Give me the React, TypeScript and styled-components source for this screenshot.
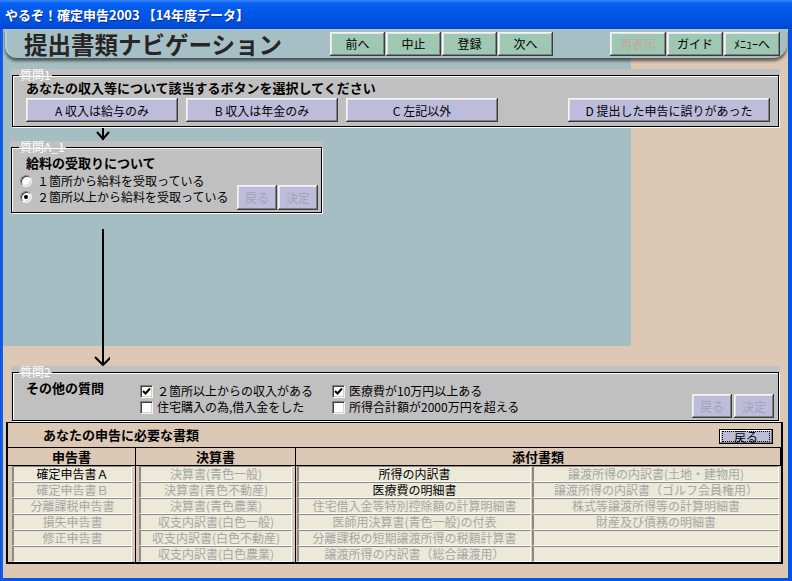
import React from "react";
import styled, { createGlobalStyle } from "styled-components";

const GlobalStyle = createGlobalStyle`
  html, body { margin: 0; padding: 0; background: #fff; }
  body { font-family: "Noto Sans CJK JP", "Noto Sans", sans-serif; font-size: 12px; }
  * { box-sizing: border-box; }
`;

const Window = styled.div`
  width: 792px;
  height: 581px;
  display: flex;
  flex-direction: column;
  background: linear-gradient(90deg, #0a4fd6, #1664ee 2px, #0055e5 4px);
  overflow: hidden;
`;

const TitleBar = styled.div`
  height: 29px;
  flex: none;
  display: flex;
  align-items: center;
  padding-left: 5px;
  color: #fff;
  font-size: 13px;
  font-weight: bold;
  text-shadow: 1px 1px 0 #0b2a8a;
  background: linear-gradient(#3a8cff 0, #0a62f2 3px, #0058ea 12px, #0052e0 22px, #0046d0 29px);
`;

const Client = styled.div`
  flex: 1;
  margin: 0 4px 3px 3px;
  display: flex;
  flex-direction: column;
  background: linear-gradient(#a4bec4, #a4bec4) 0 0 / 628px 317px no-repeat, #dcc8b5;
`;

const Header = styled.div`
  height: 29px;
  flex: none;
  margin: 0 1px 11px 2px;
  padding-left: 17px;
  display: flex;
  align-items: center;
  background: #a6bfc5;
  border-left: 2px solid #b8cdd2;
  border-radius: 0 0 14px 12px;
  box-shadow: 0 3px 3px rgba(20, 20, 20, 0.6);
`;

const PageTitle = styled.div`
  width: 306px;
  flex: none;
  font-size: 23.5px;
  font-weight: bold;
  color: #262626;
  line-height: 28px;
`;

const NavGroup = styled.div<{ $ml?: number }>`
  display: flex;
  gap: 1px;
  margin-left: ${(p) => p.$ml ?? 0}px;
`;

const Btn = styled.button<{ $tone: "mint" | "lilac"; $w: number; $h: number; $off?: boolean }>`
  width: ${(p) => p.$w}px;
  height: ${(p) => p.$h}px;
  flex: none;
  padding: 0;
  border: none;
  font-family: inherit;
  font-size: 12px;
  background: ${(p) => (p.$tone === "mint" ? "#9ec8b2" : "#bdbddb")};
  color: ${(p) => (p.$off ? (p.$tone === "mint" ? "#c4a4a4" : "#a2a2b4") : "#000")};
  box-shadow: inset -1px -1px #3c3c3c, inset 1px 1px #f4f4f4, inset -2px -2px #808080,
    inset 2px 2px #e4e4ec;
`;

const Panel = styled.div<{ $ml: number; $w: number }>`
  flex: none;
  margin-left: ${(p) => p.$ml}px;
  width: ${(p) => p.$w}px;
  padding: 0 1px 1px 1px;
  background: #c0c0c0;
`;

const Group = styled.fieldset`
  margin: 0;
  padding: 0;
  min-width: 0;
  border: 1px solid #000;
  box-shadow: 1px 1px 0 #fff, inset 1px 1px 0 #fff;
`;

const Legend = styled.legend<{ $ml: number }>`
  margin-left: ${(p) => p.$ml}px;
  padding: 0 1px;
  font-size: 12px;
  line-height: 12px;
  color: #fff;
`;

const Q1Body = styled.div`
  padding: 0 0 4px 13px;
`;

const Heading = styled.div`
  font-size: 13px;
  font-weight: bold;
  line-height: 14px;
  color: #000;
`;

const ChoiceRow = styled.div`
  display: flex;
  gap: 8px;
  margin-top: 3px;
`;

const Spacer = styled.div<{ $w?: number }>`
  width: ${(p) => p.$w ?? 0}px;
  flex: ${(p) => (p.$w === undefined ? 1 : "none")};
`;

const QA1Body = styled.div`
  display: flex;
  padding: 0 3px 0 8px;
`;

const QA1Left = styled.div`
  flex: 1;
  padding: 3px 0 7px 0;
`;

const QA1Heading = styled(Heading)`
  margin-left: 6px;
  margin-bottom: 3px;
`;

const Option = styled.div`
  height: 16px;
  display: flex;
  align-items: center;
  gap: 5px;
  line-height: 14px;
`;

const Radio = styled.span<{ $on?: boolean }>`
  width: 12px;
  height: 12px;
  flex: none;
  border-radius: 50%;
  background: #fff;
  border: 1px solid;
  border-color: #808080 #f4f4f4 #f4f4f4 #808080;
  box-shadow: inset 1px 1px #404040, inset -1px -1px #d4d0c8;
  display: flex;
  align-items: center;
  justify-content: center;
  &::after {
    content: "";
    width: 4px;
    height: 4px;
    border-radius: 50%;
    background: ${(p) => (p.$on ? "#000" : "transparent")};
  }
`;

const BtnPair = styled.div<{ $gap: number; $mb: number }>`
  display: flex;
  gap: ${(p) => p.$gap}px;
  align-self: flex-end;
  margin-bottom: ${(p) => p.$mb}px;
`;

const Q2Body = styled.div`
  display: flex;
  padding: 0 4px 0 13px;
`;

const Q2Heading = styled(Heading)`
  width: 114px;
  flex: none;
  padding-top: 3px;
`;

const Checks = styled.div`
  display: grid;
  grid-template-columns: 192px auto;
  grid-auto-rows: 16px;
  padding: 5px 0;
`;

const Check = styled.div`
  display: flex;
  align-items: center;
  gap: 4px;
  line-height: 14px;
`;

const Box = styled.span`
  width: 13px;
  height: 13px;
  flex: none;
  background: #fff;
  border: 1px solid;
  border-color: #808080 #f4f4f4 #f4f4f4 #808080;
  box-shadow: inset 1px 1px #404040, inset -1px -1px #d4d0c8;
  display: flex;
  align-items: center;
  justify-content: center;
`;

const ArrowRow = styled.div<{ $h: number }>`
  height: ${(p) => p.$h}px;
  flex: none;
  padding-left: 87px;
  svg { display: block; }
`;

const Table = styled.div`
  flex: none;
  margin-left: 3px;
  width: 777px;
  border: 2px solid #000;
  border-top-width: 1px;
  background: #dcc8b5;
`;

const TableTitle = styled.div`
  height: 25px;
  display: flex;
  align-items: center;
  justify-content: space-between;
  padding: 0 8px 0 35px;
  border-bottom: 1px solid #000;
`;

const BackBtn = styled.button`
  width: 54px;
  height: 15px;
  padding: 2px 3px;
  margin-top: 2px;
  border: 1px solid #000;
  background: #bdbddb;
  box-shadow: inset -1px -1px #808080, inset 1px 1px #fff;
  font-family: inherit;
  font-size: 12px;
  line-height: 9px;
  color: #000;
  span {
    display: block;
    height: 9px;
    outline: 1px dotted #000;
  }
`;

const Cols = styled.div`
  display: grid;
  grid-template-columns: 128px 160px 1fr;
`;

const HeadCell = styled.div`
  height: 18px;
  font-size: 13px;
  font-weight: bold;
  line-height: 18px;
  text-align: center;
  border-bottom: 1px solid #000;
  &:not(:last-child) { border-right: 1px solid #000; }
`;

const BodyCol = styled.div<{ $pl: number; $pr: number }>`
  padding: 0 ${(p) => p.$pr}px 0 ${(p) => p.$pl}px;
  &:not(:last-child) { border-right: 1px solid #000; }
`;

const SubGrid = styled.div`
  display: grid;
  grid-template-columns: 234px 1fr;
  column-gap: 1px;
`;

const Cell = styled.div<{ $on?: boolean }>`
  height: 16px;
  background: #ece9d8;
  border-top: 1px solid #8a8a8a;
  border-left: 2px solid #8a8a8a;
  border-right: 1px solid #fcfcfc;
  border-bottom: 1px solid #fcfcfc;
  font-size: 12px;
  line-height: 14px;
  text-align: center;
  white-space: nowrap;
  overflow: hidden;
  color: ${(p) => (p.$on ? "#000" : "#a6a6a6")};
`;

type Doc = { t: string; on?: boolean };

const returns: Doc[] = [
  { t: "確定申告書Ａ", on: true },
  { t: "確定申告書Ｂ" },
  { t: "分離課税申告書" },
  { t: "損失申告書" },
  { t: "修正申告書" },
  { t: "" },
];

const statements: Doc[] = [
  { t: "決算書(青色一般)" },
  { t: "決算書(青色不動産)" },
  { t: "決算書(青色農業)" },
  { t: "収支内訳書(白色一般)" },
  { t: "収支内訳書(白色不動産)" },
  { t: "収支内訳書(白色農業)" },
];

const attachments: Doc[] = [
  { t: "所得の内訳書", on: true },
  { t: "譲渡所得の内訳書(土地・建物用)" },
  { t: "医療費の明細書", on: true },
  { t: "譲渡所得の内訳書（ゴルフ会員権用）" },
  { t: "住宅借入金等特別控除額の計算明細書" },
  { t: "株式等譲渡所得等の計算明細書" },
  { t: "医師用決算書(青色一般)の付表" },
  { t: "財産及び債務の明細書" },
  { t: "分離課税の短期譲渡所得の税額計算書" },
  { t: "" },
  { t: "譲渡所得の内訳書（総合譲渡用）" },
  { t: "" },
];

const Tick = () => (
  <svg width="9" height="9" viewBox="0 0 9 9">
    <path d="M1 4 L3.5 6.5 L8 1.5" fill="none" stroke="#000" strokeWidth="2" />
  </svg>
);

export default function App() {
  return (
    <Window>
      <GlobalStyle />
      <TitleBar>やるぞ！確定申告2003 【14年度データ】</TitleBar>
      <Client>
        <Header>
          <PageTitle>提出書類ナビゲーション</PageTitle>
          <NavGroup>
            <Btn $tone="mint" $w={55} $h={24}>前へ</Btn>
            <Btn $tone="mint" $w={55} $h={24}>中止</Btn>
            <Btn $tone="mint" $w={55} $h={24}>登録</Btn>
            <Btn $tone="mint" $w={55} $h={24}>次へ</Btn>
          </NavGroup>
          <NavGroup $ml={57}>
            <Btn $tone="mint" $w={56} $h={24} $off>再表示</Btn>
            <Btn $tone="mint" $w={56} $h={24}>ガイド</Btn>
            <Btn $tone="mint" $w={56} $h={24}>ﾒﾆｭｰへ</Btn>
          </NavGroup>
        </Header>

        <Panel $ml={8} $w={769}>
          <Group>
            <Legend $ml={6}>質問1</Legend>
            <Q1Body>
              <Heading>あなたの収入等について該当するボタンを選択してください</Heading>
              <ChoiceRow>
                <Btn $tone="lilac" $w={152} $h={24}>A 収入は給与のみ</Btn>
                <Btn $tone="lilac" $w={152} $h={24}>B 収入は年金のみ</Btn>
                <Btn $tone="lilac" $w={152} $h={24}>C 左記以外</Btn>
                <Spacer $w={54} />
                <Btn $tone="lilac" $w={202} $h={24}>D 提出した申告に誤りがあった</Btn>
              </ChoiceRow>
            </Q1Body>
          </Group>
        </Panel>

        <ArrowRow $h={13}>
          <svg width="20" height="13" viewBox="0 0 20 13">
            <path d="M13 0 V12" stroke="#000" strokeWidth="2" />
            <path d="M7 4 L13 11 L19 4" fill="none" stroke="#000" strokeWidth="2" />
          </svg>
        </ArrowRow>

        <Panel $ml={7} $w={313}>
          <Group>
            <Legend $ml={7}>質問A_1</Legend>
            <QA1Body>
              <QA1Left>
                <QA1Heading>給料の受取りについて</QA1Heading>
                <Option>
                  <Radio />１箇所から給料を受取っている
                </Option>
                <Option>
                  <Radio $on />２箇所以上から給料を受取っている
                </Option>
              </QA1Left>
              <BtnPair $gap={1} $mb={2}>
                <Btn $tone="lilac" $w={40} $h={25} $off>戻る</Btn>
                <Btn $tone="lilac" $w={40} $h={25} $off>決定</Btn>
              </BtnPair>
            </QA1Body>
          </Group>
        </Panel>

        <ArrowRow $h={152}>
          <svg width="20" height="152" viewBox="0 0 20 152">
            <path d="M13 15 V151" stroke="#000" strokeWidth="2" />
            <path d="M5 143 L13 151 L21 143" fill="none" stroke="#000" strokeWidth="2" />
          </svg>
        </ArrowRow>

        <Panel $ml={8} $w={769}>
          <Group>
            <Legend $ml={6}>質問2</Legend>
            <Q2Body>
              <Q2Heading>その他の質問</Q2Heading>
              <Checks>
                <Check>
                  <Box><Tick /></Box>２箇所以上からの収入がある
                </Check>
                <Check>
                  <Box><Tick /></Box>医療費が10万円以上ある
                </Check>
                <Check>
                  <Box />住宅購入の為,借入金をした
                </Check>
                <Check>
                  <Box />所得合計額が2000万円を超える
                </Check>
              </Checks>
              <Spacer />
              <BtnPair $gap={2} $mb={2}>
                <Btn $tone="lilac" $w={40} $h={24} $off>戻る</Btn>
                <Btn $tone="lilac" $w={40} $h={24} $off>決定</Btn>
              </BtnPair>
            </Q2Body>
          </Group>
        </Panel>

        <Table>
          <TableTitle>
            <Heading>あなたの申告に必要な書類</Heading>
            <BackBtn>
              <span>戻る</span>
            </BackBtn>
          </TableTitle>
          <Cols>
            <HeadCell>申告書</HeadCell>
            <HeadCell>決算書</HeadCell>
            <HeadCell>添付書類</HeadCell>
            <BodyCol $pl={4} $pr={3}>
              {returns.map((d, i) => (
                <Cell key={i} $on={d.on}>{d.t}</Cell>
              ))}
            </BodyCol>
            <BodyCol $pl={3} $pr={3}>
              {statements.map((d, i) => (
                <Cell key={i} $on={d.on}>{d.t}</Cell>
              ))}
            </BodyCol>
            <BodyCol $pl={1} $pr={2}>
              <SubGrid>
                {attachments.map((d, i) => (
                  <Cell key={i} $on={d.on}>{d.t}</Cell>
                ))}
              </SubGrid>
            </BodyCol>
          </Cols>
        </Table>
      </Client>
    </Window>
  );
}
